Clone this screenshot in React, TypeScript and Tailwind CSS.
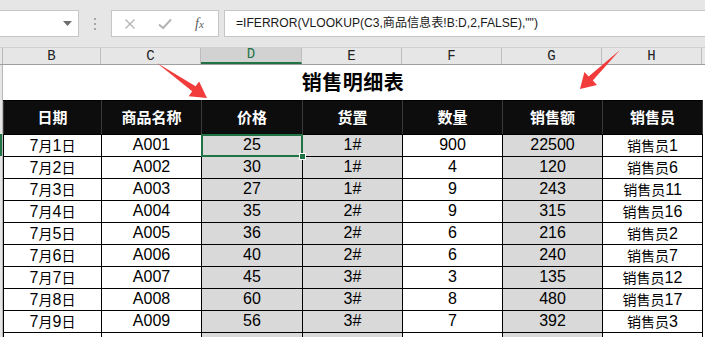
import React from "react";

const rows = [
  ["7月1日", "A001", "25", "1#", "900", "22500", "销售员1"],
  ["7月2日", "A002", "30", "1#", "4", "120", "销售员6"],
  ["7月3日", "A003", "27", "1#", "9", "243", "销售员11"],
  ["7月4日", "A004", "35", "2#", "9", "315", "销售员16"],
  ["7月5日", "A005", "36", "2#", "6", "216", "销售员2"],
  ["7月6日", "A006", "40", "2#", "6", "240", "销售员7"],
  ["7月7日", "A007", "45", "3#", "3", "135", "销售员12"],
  ["7月8日", "A008", "60", "3#", "8", "480", "销售员17"],
  ["7月9日", "A009", "56", "3#", "7", "392", "销售员3"],
  ["", "", "", "", "", "", ""],
];

const heads = ["日期", "商品名称", "价格", "货置", "数量", "销售额", "销售员"];
const letters = ["B", "C", "D", "E", "F", "G", "H"];
const widths = [98, 100, 101, 100, 100, 100, 100];
const shaded = [false, false, true, true, false, true, false];

// Latin in the cell font, CJK runs a bit smaller like Excel's fallback
const Mixed = ({ s }: { s: string }) => {
  const parts = s.split(/([\u4e00-\u9fff]+)/).filter(Boolean);
  return (
    <>
      {parts.map((p, i) =>
        /[\u4e00-\u9fff]/.test(p) ? (
          <span key={i} className="text-[14px] font-['Noto_Sans_CJK_SC',sans-serif]">
            {p}
          </span>
        ) : (
          <span key={i}>{p}</span>
        )
      )}
    </>
  );
};

const Toolbar = () => (
  <div className="h-[48px] bg-[#e6e6e6] border-b border-[#d0d0d0] flex items-center">
    {/* name box */}
    <div className="w-[79px] h-[27px] bg-white border border-[#c6c6c6] border-l-0 flex items-center justify-end pr-[6px]">
      <svg width="9" height="5" viewBox="0 0 9 5">
        <path d="M0 0 H9 L4.5 5 Z" fill="#6e6e6e" />
      </svg>
    </div>
    <div className="w-[32px] flex flex-col items-center gap-[3px]">
      <span className="w-[2px] h-[2px] bg-[#a8a8a8]" />
      <span className="w-[2px] h-[2px] bg-[#a8a8a8]" />
      <span className="w-[2px] h-[2px] bg-[#a8a8a8]" />
    </div>
    {/* cancel / enter / fx */}
    <div className="w-[108px] h-[27px] bg-white border border-[#c6c6c6] flex items-center">
      <svg width="12" height="12" viewBox="0 0 12 12" className="ml-[12px]">
        <path d="M1.5 1.5 L10.5 10.5 M10.5 1.5 L1.5 10.5" stroke="#b4b4b4" strokeWidth="1.4" />
      </svg>
      <svg width="14" height="12" viewBox="0 0 14 12" className="ml-[22px]">
        <path d="M1 6.5 L5 10 L13 1.5" stroke="#b4b4b4" strokeWidth="2" fill="none" />
      </svg>
      <span className="ml-[23px] text-[14px] italic text-[#5e5e5e] font-['Liberation_Serif',serif] leading-none">
        f<span className="text-[11px]">x</span>
      </span>
    </div>
    <div className="ml-[5px] flex-1 h-[27px] bg-white border border-[#c6c6c6] border-r-0 flex items-center pl-[11px]">
      <span className="text-[12.1px] text-[#1a1a1a] font-['Liberation_Sans','Noto_Sans_CJK_SC',sans-serif] whitespace-nowrap">
        =IFERROR(VLOOKUP(C3,商品信息表!B:D,2,FALSE),"")
      </span>
    </div>
  </div>
);

const ColumnHeads = () => (
  <div className="flex h-[17px] bg-[#e6e6e6] border-b border-[#9f9f9f]">
    <div className="w-[3px] border-r border-[#b8b8b8]" />
    {letters.map((l, i) => (
      <div
        key={l}
        style={{ width: widths[i] }}
        className={`shrink-0 flex items-end justify-center pb-[1px] text-[14px] leading-none font-['Liberation_Mono',monospace] border-r border-[#bdbdbd] ${
          l === "D" ? "bg-[#d2d2d2] text-[#217346] border-b-2 border-b-[#217346]" : "text-[#222]"
        }`}
      >
        {l}
      </div>
    ))}
    <div className="flex-1" />
  </div>
);

export default function App() {
  return (
    <div className="relative w-[705px] h-[337px] overflow-hidden bg-white">
      <Toolbar />
      <ColumnHeads />
      <div className="flex">
        <div className="w-[3px] shrink-0 bg-[#e6e6e6] border-r border-[#b8b8b8] flex flex-col">
          <div className="h-[69px]" />
          <div className="h-[22px] bg-[#217346] w-[2px]" />
        </div>
        <table className="table-fixed border-collapse font-['Liberation_Sans','Noto_Sans_CJK_SC',sans-serif] text-[16px] text-black">
          <colgroup>
            {widths.map((w, i) => (
              <col key={i} style={{ width: w }} />
            ))}
          </colgroup>
          <tbody>
            <tr className="h-[35px]">
              <td colSpan={7} className="text-center align-middle">
                <span className="text-[20px] font-bold font-['Noto_Sans_CJK_SC',sans-serif] tracking-[0.5px]">
                  销售明细表
                </span>
              </td>
            </tr>
            <tr className="h-[34px] bg-[#0d0d0d]">
              {heads.map((h) => (
                <td
                  key={h}
                  className="text-center text-white font-bold text-[15px] font-['Noto_Sans_CJK_SC',sans-serif] border border-black border-x-[#3a3a3a]"
                >
                  {h}
                </td>
              ))}
            </tr>
            {rows.map((r, ri) => (
              <tr key={ri} className="h-[22px]">
                {r.map((c, ci) => (
                  <td
                    key={ci}
                    className={`relative p-0 text-center leading-[20px] border border-black whitespace-nowrap ${
                      shaded[ci] ? "bg-[#d9d9d9]" : "bg-white"
                    } ${ri === 0 && ci === 2 ? "z-10" : ""}`}
                  >
                    <Mixed s={c} />
                    {ri === 0 && ci === 2 && (
                      <div className="absolute -inset-[1px] border-2 border-[#217346]">
                        <div className="absolute -right-[5px] -bottom-[5px] w-[7px] h-[7px] bg-[#217346] border border-white" />
                      </div>
                    )}
                  </td>
                ))}
              </tr>
            ))}
          </tbody>
        </table>
      </div>
      {/* annotation arrows */}
      <svg className="absolute left-0 top-0 pointer-events-none z-20" width="705" height="337">
        <polygon
          points="157,63 192.2,91.3 188.7,96.2 207,98 199.1,81.4 195.6,86.3"
          fill="#f23b3b"
        />
        <polygon
          points="620,50 592.8,80.6 597,84.9 580,89 584.4,72.1 588.6,76.4"
          fill="#f23b3b"
        />
      </svg>
    </div>
  );
}
